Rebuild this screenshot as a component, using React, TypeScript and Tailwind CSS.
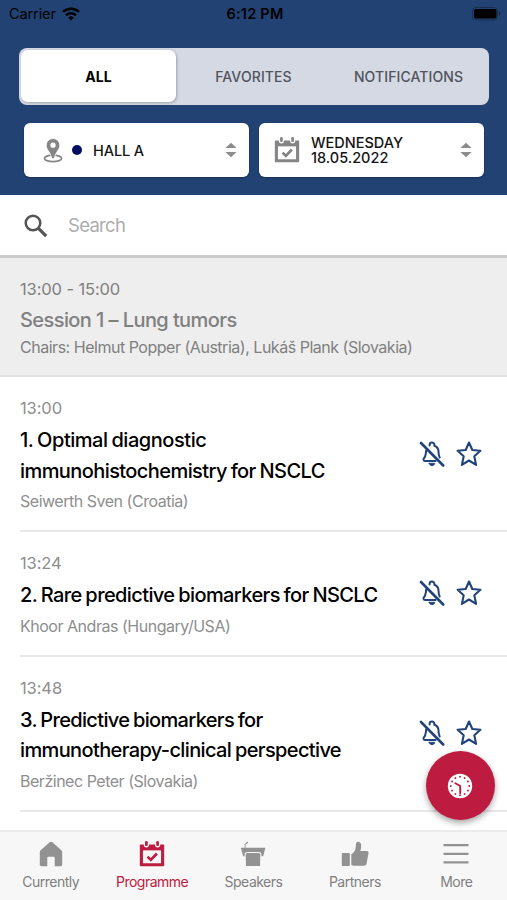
import React from "react";

const talks = [
  {
    time: "13:00",
    lines: [
      { text: "1. Optimal diagnostic", cls: "tracking-[-0.46px] [word-spacing:-1px]" },
      { text: "immunohistochemistry for NSCLC", cls: "tracking-[-0.58px] [word-spacing:-1px]" },
    ],
    speaker: "Seiwerth Sven (Croatia)",
  },
  {
    time: "13:24",
    lines: [{ text: "2. Rare predictive biomarkers for NSCLC", cls: "tracking-[-0.6px] [word-spacing:-1px]" }],
    speaker: "Khoor Andras (Hungary/USA)",
  },
  {
    time: "13:48",
    lines: [
      { text: "3. Predictive biomarkers for", cls: "tracking-[-0.66px] [word-spacing:-1px]" },
      { text: "immunotherapy-clinical perspective", cls: "tracking-[-0.63px] [word-spacing:-1px]" },
    ],
    speaker: "Beržinec Peter (Slovakia)",
  },
];

const WifiIcon = () => (
  <svg width="18" height="14" viewBox="0 0 18 14" fill="none" stroke="#000" strokeWidth="2.5">
    <path d="M1 4.9a11.6 11.6 0 0 1 16 0" />
    <path d="M4 8.3a7.2 7.2 0 0 1 10 0" />
    <path d="M9 13.5L6.2 10.7a4 4 0 0 1 5.6 0z" fill="#000" stroke="none" />
  </svg>
);

const BatteryIcon = () => (
  <svg width="29" height="14" viewBox="0 0 29 14">
    <rect x="0.5" y="0.5" width="25" height="12.5" rx="3.5" fill="none" stroke="#000" strokeOpacity="0.3" />
    <rect x="2" y="2" width="22.5" height="9.5" rx="2" />
    <path d="M27 4.5v4.2a2.3 2.3 0 0 0 0-4.2z" opacity="0.4" />
  </svg>
);

const PinIcon = () => (
  <svg width="20" height="25" viewBox="0 0 20 25">
    <ellipse cx="10" cy="20.4" rx="8.6" ry="3.2" fill="none" stroke="#858585" strokeWidth="1.7" />
    <path
      d="M10 0.5a6.8 6.8 0 0 0-6.8 6.8c0 4.7 4.6 6.7 5.4 13.2h2.8c.8-6.5 5.4-8.5 5.4-13.2A6.8 6.8 0 0 0 10 .5z"
      fill="#858585"
      stroke="#fff"
      strokeWidth="0.8"
    />
    <circle cx="10" cy="7.2" r="2.6" fill="#fff" />
  </svg>
);

const CalendarIcon = ({ color, size, bg }: { color: string; size: number; bg: string }) => (
  <svg width={size} height={size} viewBox="0 0 25 25">
    <path d="M1.5 3.4h22c.4 0 .7.3.7.7v19.4c0 .4-.3.7-.7.7h-22a.7.7 0 0 1-.7-.7V4.1c0-.4.3-.7.7-.7z" fill={color} />
    <path d="M3.8 9h17.4v12.4H3.8z" fill={bg} />
    <rect x="4.6" y="-1" width="5" height="7.2" rx="2.5" fill={bg} />
    <rect x="15.4" y="-1" width="5" height="7.2" rx="2.5" fill={bg} />
    <rect x="5.8" y="0" width="2.6" height="4.8" rx="1.2" fill={color} />
    <rect x="16.6" y="0" width="2.6" height="4.8" rx="1.2" fill={color} />
    <path d="M8.2 15l3.2 3.2 5.8-6.2" fill="none" stroke={color} strokeWidth="2.6" />
  </svg>
);

const SortIcon = () => (
  <svg width="12" height="16" viewBox="0 0 12 16" fill="#8c8c8c">
    <path d="M6 0.8L11.6 6H0.4z" />
    <path d="M6 15.2L11.6 10H0.4z" />
  </svg>
);

const SearchIcon = () => (
  <svg width="24" height="24" viewBox="0 0 24 24" fill="none" stroke="#555">
    <circle cx="9" cy="9" r="7.3" strokeWidth="2.5" />
    <path d="M14.2 14.2l8 8" strokeWidth="3.2" />
  </svg>
);

const BellOffIcon = () => (
  <svg width="26" height="26" viewBox="0 0 26 26" fill="none" stroke="#21437a" strokeLinecap="round">
    <path d="M10.6 4.6V4a2.4 2.4 0 0 1 4.8 0v.7c2.7 1 4.1 3.1 4.1 5.9 0 2.400.3 4.300 1.200 5.900" strokeWidth="2" />
    <path d="M7.200 9.400c-.3 3.800-.6 6.200-2.200 7.900-1 1.100-.5 2.600.9 2.600h10.700" strokeWidth="2" />
    <path d="M10.200 22.300h5.600c-.2 1.400-1.300 2.400-2.800 2.400s-2.600-1-2.800-2.400z" fill="#21437a" strokeWidth="0.8" />
    <path d="M2 2l22.200 22.500" strokeWidth="2.600" />
  </svg>
);

const StarIcon = () => (
  <svg width="26" height="26" viewBox="0 0 26 26" fill="none" stroke="#21437a" strokeWidth="2.1" strokeLinejoin="round">
    <path d="M13 1.500L16.300 9L24.400 9.800L18.300 15.200L20.100 23.900L13 19.500L5.900 23.900L7.700 15.200L1.600 9.800L9.700 9z" />
  </svg>
);

const ClockIcon = () => (
  <svg width="26" height="26" viewBox="0 0 26 26">
    <circle cx="13" cy="13" r="12.2" fill="#fff" />
    <g fill="#bd1c40">
      {[0, 1, 2, 3, 4, 5, 6, 7, 8, 9, 10, 11].map((n) => (
        <circle key={n} cx="13" cy="3.8" r="0.95" transform={`rotate(${n * 30} 13 13)`} />
      ))}
    </g>
    <path d="M8.3 10.2l4.900 2.800v7.300" fill="none" stroke="#bd1c40" strokeWidth="1.9" strokeLinecap="round" strokeLinejoin="round" />
  </svg>
);

const HomeIcon = () => (
  <svg width="24" height="26" viewBox="0 0 24 26" fill="#929292">
    <path d="M10.900 1.100a1.700 1.700 0 0 1 2.200 0l9 7.900c.7.600 1.100 1.400 1.100 2.300v12.200c0 1-.7 1.700-1.700 1.700h-5.800v-8.500a1 1 0 0 0-1-1H9.300a1 1 0 0 0-1 1v8.500H2.500c-1 0-1.700-.7-1.700-1.700V11.300c0-.9.4-1.700 1.100-2.300z" />
  </svg>
);

const PodiumIcon = () => (
  <svg width="26" height="26" viewBox="0 0 26 26">
    <path d="M0.800 6.800h24.600l-2.200 8.400H3.200z" fill="#929292" />
    <path
      d="M7.300 11.500h11.400c1.400 0 2.200.8 2.200 2.100l-.3 12H5.400l-.3-12c0-1.300.8-2.100 2.200-2.100z"
      fill="#929292"
      stroke="#f7f7f7"
      strokeWidth="1.1"
    />
    <path d="M5.100 6.800V3.600L6.900 1.500" fill="none" stroke="#929292" strokeWidth="1" />
    <path d="M5.800 2.400L7.300.6l.8.800-1.500 1.800z" fill="#929292" />
  </svg>
);

const ThumbIcon = () => (
  <svg width="28" height="26" viewBox="0 0 28 26" fill="#929292">
    <rect x="0.8" y="12" width="8" height="13" rx="0.8" />
    <path d="M10.300 13.200c3.300-2 4.400-4.300 4.500-8.500 0-2.600.8-4 2.400-4 2 0 3 1.900 3 4.400 0 1.700-.4 3.300-.9 4.800h6.300c1.500 0 2.200 1 1.900 2.400l-1.900 10.200c-.3 1.500-1.100 2.200-2.500 2.200h-9.600c-1.400 0-2.300-.4-3.200-1z" />
  </svg>
);

const MenuIcon = () => (
  <svg width="26" height="26" viewBox="0 0 26 26" stroke="#929292" strokeWidth="2.2">
    <path d="M0.5 4.2h25M0.5 12.8h25M0.5 21.3h25" />
  </svg>
);

const tabs = [
  { label: "Currently", icon: <HomeIcon />, active: false },
  { label: "Programme", icon: <CalendarIcon color="#bd1c40" size={26} bg="#f7f7f7" />, active: true },
  { label: "Speakers", icon: <PodiumIcon />, active: false },
  { label: "Partners", icon: <ThumbIcon />, active: false },
  { label: "More", icon: <MenuIcon />, active: false },
];

const App: React.FC = () => {
  return (
    <div className="relative flex h-[900px] w-[507px] flex-col overflow-hidden bg-white font-['Inter',sans-serif]">
      <header className="h-[195px] shrink-0 bg-[#214273]">
        {/* status bar */}
        <div className="grid h-[27px] grid-cols-3 items-center pl-[9px] pr-[6px] text-black">
          <div className="flex items-center gap-[6px] text-[14.5px]">
            <span className="tracking-[-0.1px]">Carrier</span>
            <WifiIcon />
          </div>
          <span className="text-center text-[14.5px] font-semibold tracking-[0.25px]">6:12 PM</span>
          <div className="flex justify-end">
            <BatteryIcon />
          </div>
        </div>

        <div className="ml-[19px] mr-[18px] mt-[21px] flex h-[57px] rounded-lg bg-[#d5d9e3] p-[2px] pb-[3px] text-[14px] font-medium text-[#50545c]">
          <button className="w-[155px] rounded-[7px] bg-white font-bold text-black shadow-[1px_1px_3px_rgba(0,0,0,0.25)]">ALL</button>
          <button className="w-[155px] tracking-[0.1px]">FAVORITES</button>
          <button className="w-[155px] tracking-[0.1px]">NOTIFICATIONS</button>
        </div>

        <div className="ml-[24px] mr-[23px] mt-[18px] flex gap-[10px] text-[14.5px] font-medium leading-[15px] text-[#151515]">
          <button className="flex h-[54px] w-[225px] items-center rounded-md bg-white pl-[19px] pr-[12px] shadow-[0_1px_2px_rgba(0,0,0,0.3)]">
            <PinIcon />
            <span className="ml-[9px] size-[10px] rounded-full bg-[#000f62]" />
            <span className="ml-[11px] tracking-[-0.1px]">HALL A</span>
            <span className="ml-auto"><SortIcon /></span>
          </button>
          <button className="flex h-[54px] w-[225px] items-center rounded-md bg-white pl-[15px] pr-[12px] text-left shadow-[0_1px_2px_rgba(0,0,0,0.3)]">
            <CalendarIcon color="#858585" size={26} bg="#fff" />
            <span className="ml-[11px] w-[100px]">WEDNESDAY 18.05.2022</span>
            <span className="ml-auto"><SortIcon /></span>
          </button>
        </div>
      </header>

      <div className="flex h-[63px] shrink-0 items-center border-b-[3px] border-[#cbcbcb] pl-[24px] pt-[2px]">
        <SearchIcon />
        <span className="ml-[20px] text-[18.5px] tracking-[-0.7px] text-[#adadad]">Search</span>
      </div>

      <section className="h-[119px] shrink-0 border-b-2 border-[#e2e2e2] bg-[#eeeeee] pl-5 pt-[21px] text-[#808080]">
        <p className="text-[16.5px] leading-5 tracking-[-0.12px]">13:00 - 15:00</p>
        <h2 className="mt-[6px] text-[20px] font-medium leading-[30px] tracking-[-0.58px]">Session 1 – Lung tumors</h2>
        <p className="mt-[2px] whitespace-nowrap text-[16px] leading-5 tracking-[-0.48px]">
          Chairs: Helmut Popper (Austria), Lukáš Plank (Slovakia)
        </p>
      </section>

      <main className="min-h-0 flex-1 overflow-hidden pl-5">
        {talks.map((talk) => (
          <article key={talk.time} className="flex items-center border-b-2 border-[#e8e8e8] pb-[19px] pr-[25px] pt-[21px]">
            <div className="min-w-0 flex-1 whitespace-nowrap">
              <p className="text-[16.5px] leading-5 tracking-[-0.1px] text-[#8e8e8e]">{talk.time}</p>
              <h3 className="mt-[7px] text-[20px] font-medium leading-[30.5px] text-black">
                {talk.lines.map((line) => (
                  <span key={line.text} className={`block ${line.cls}`}>{line.text}</span>
                ))}
              </h3>
              <p className="mt-[5px] text-[16px] leading-5 tracking-[-0.48px] text-[#8e8e8e]">{talk.speaker}</p>
            </div>
            <div className="mb-[2px] flex gap-[11px]">
              <BellOffIcon />
              <StarIcon />
            </div>
          </article>
        ))}
      </main>

      <nav className="grid h-[70px] shrink-0 grid-cols-5 border-t-2 border-[#ebebeb] bg-[#f7f7f7]">
        {tabs.map((tab) => (
          <a
            key={tab.label}
            className={`flex flex-col items-center pt-[9px] text-[14px] leading-5 tracking-[-0.5px] ${tab.active ? "text-[#bd1c40]" : "text-[#808080]"}`}
          >
            {tab.icon}
            <span className="mt-[5px]">{tab.label}</span>
          </a>
        ))}
      </nav>

      {/* floating "now" button */}
      <button className="absolute bottom-[80px] right-[12px] flex size-[69px] items-center justify-center rounded-full bg-[#bd1c40] pr-[2px] shadow-[0_3px_6px_rgba(0,0,0,0.35)]">
        <ClockIcon />
      </button>
    </div>
  );
};

export default App;
